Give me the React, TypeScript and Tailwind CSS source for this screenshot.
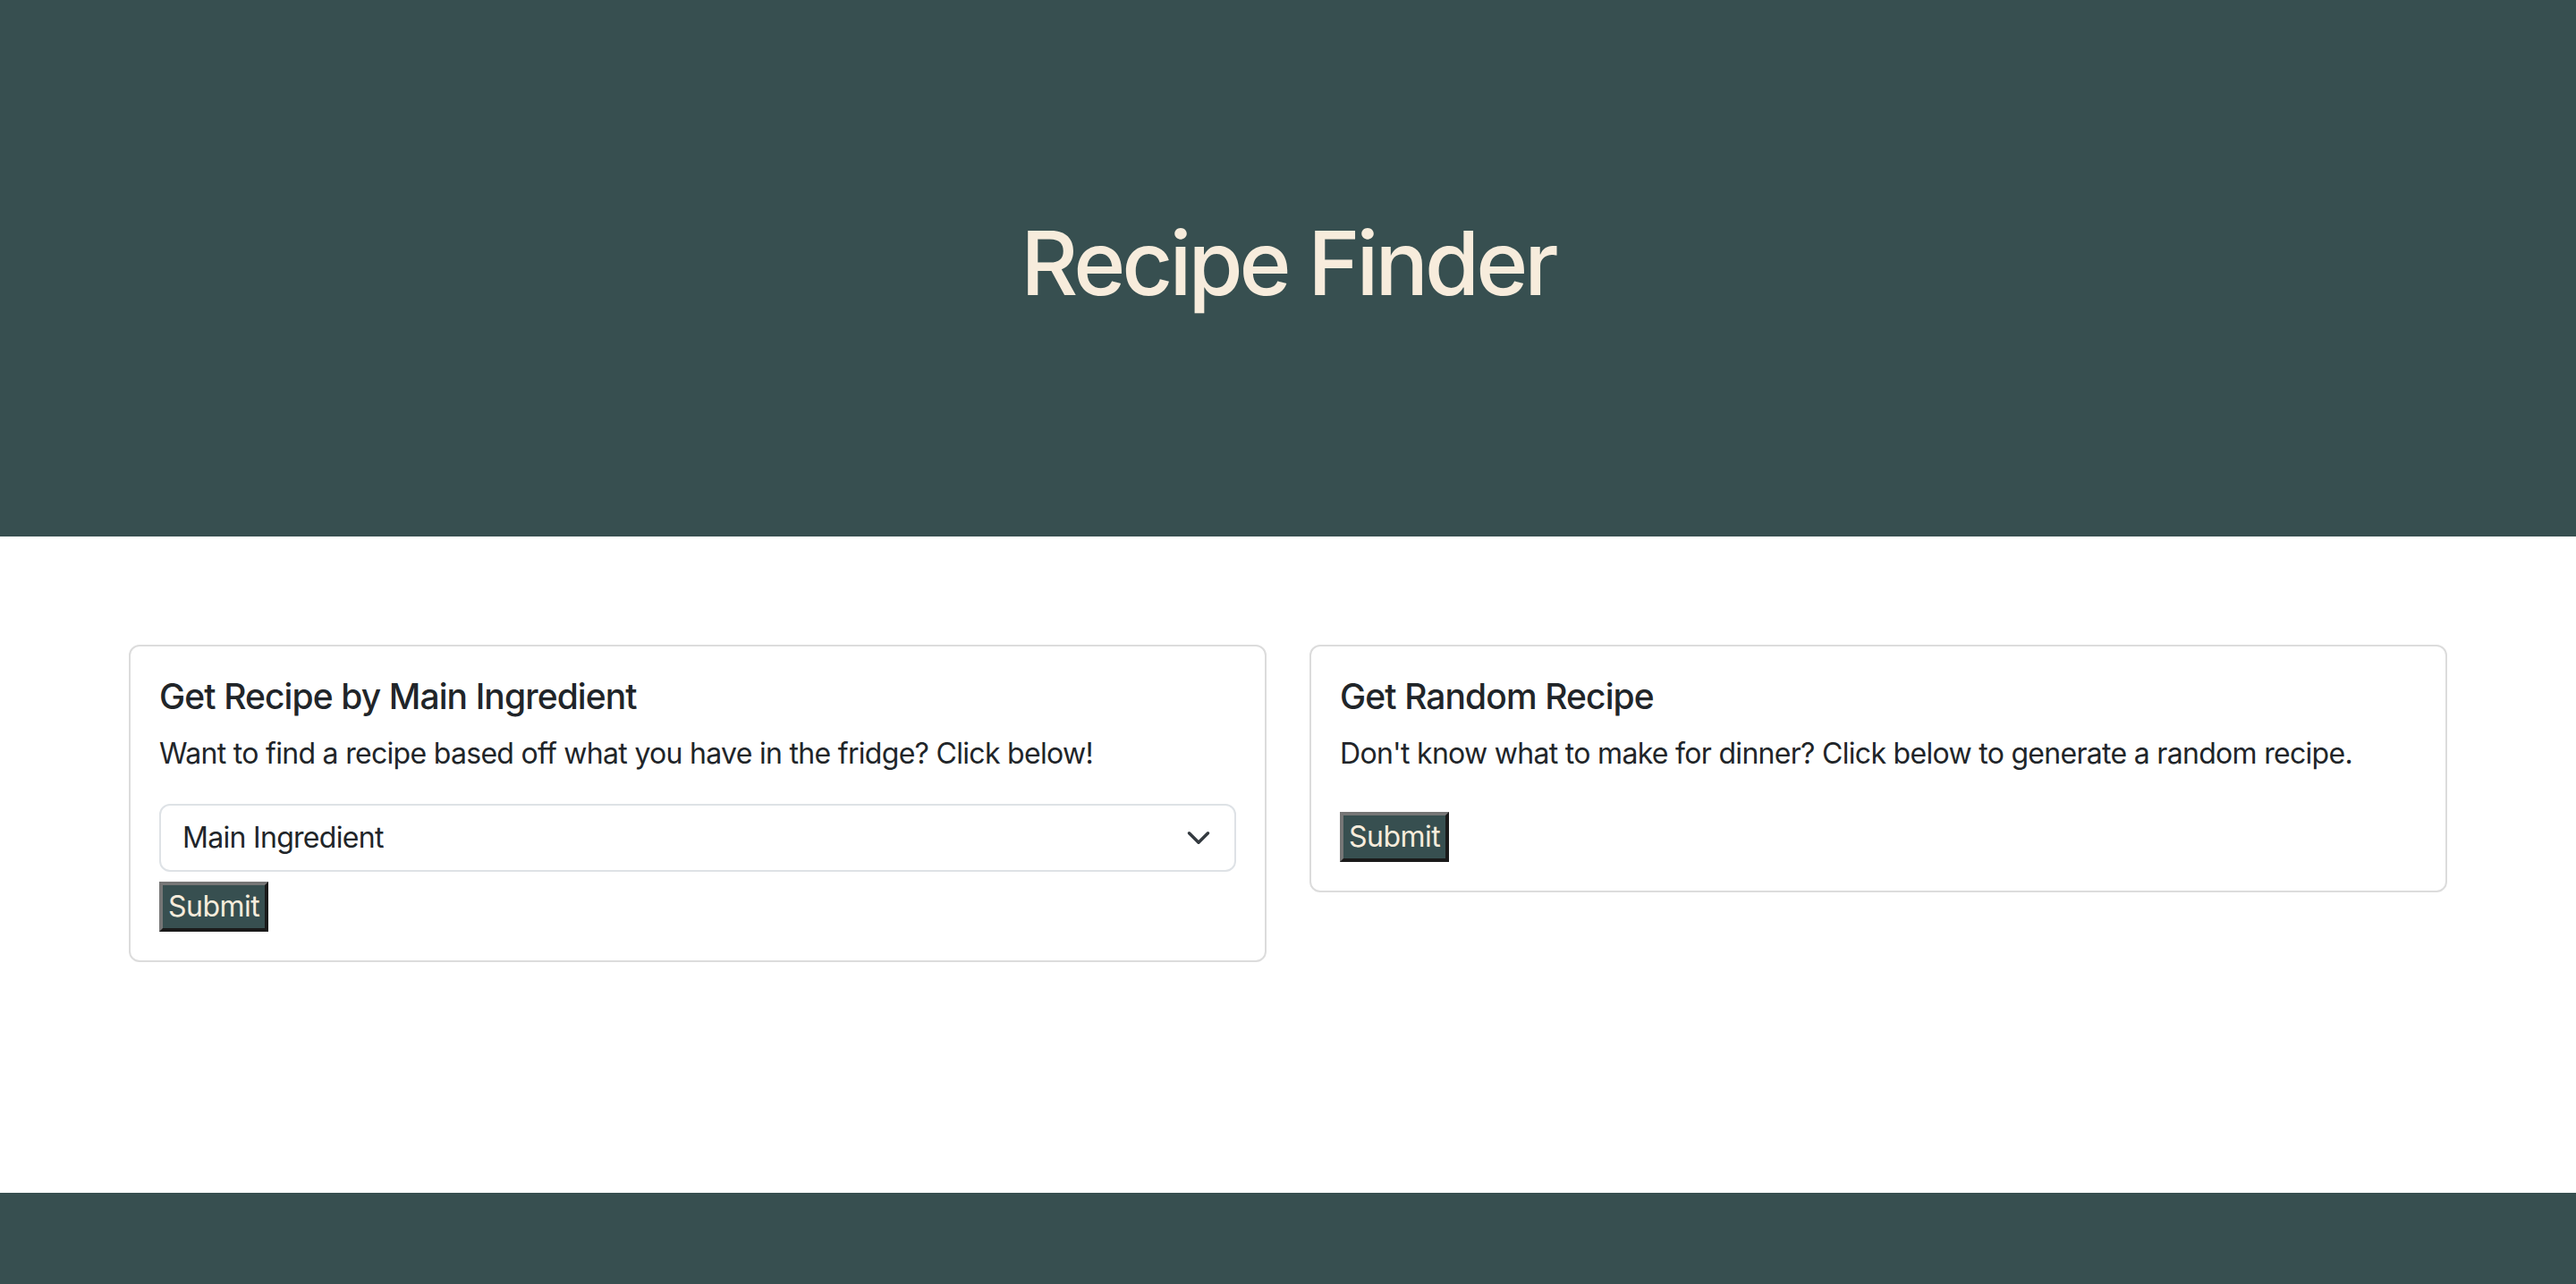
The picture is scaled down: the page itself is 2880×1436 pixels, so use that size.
import { useState } from 'react'

const INGREDIENTS = ['Chicken', 'Beef', 'Pork', 'Salmon', 'Pasta', 'Rice']

function SubmitButton({ className = '' }: { className?: string }) {
    return (
        <button
            type="button"
            className={`block bg-[#374f50] text-[#f7ecdc] text-[32px] leading-[48px] tracking-[-0.5px] px-[6px] border-[4px] border-solid border-t-[#767676] border-l-[#767676] border-b-[#1a1a1a] border-r-[#1a1a1a] ${className}`}
        >
            Submit
        </button>
    )
}

export default function App() {
    const [ingredient, setIngredient] = useState('')

    return (
        <div className="h-screen flex flex-col bg-white text-[#212529] font-['Inter','Liberation_Sans',sans-serif]">
            {/* Header */}
            <header className="h-[600px] shrink-0 bg-[#374f50] flex items-center justify-center pb-[12px]">
                <h1 className="text-[99px] leading-[1.2] font-medium text-[#f7ecdc] tracking-[-4px]">
                    Recipe Finder
                </h1>
            </header>

            {/* Cards */}
            <main className="flex-1 pt-[121px]">
                <div className="mx-[144px] grid grid-cols-2 gap-[48px] items-start">
                    <div className="border-2 border-[#dcdcdc] rounded-[12px] p-[32px]">
                        <h5 className="text-[39px] leading-[48px] font-medium tracking-[-0.9px] mb-[16px]">
                            Get Recipe by Main Ingredient
                        </h5>
                        <p className="text-[32px] leading-[48px] tracking-[-0.7px] mb-[32px]">
                            Want to find a recipe based off what you have in the fridge? Click below!
                        </p>
                        <div className="relative">
                            <select
                                value={ingredient}
                                onChange={e => setIngredient(e.target.value)}
                                className="appearance-none w-full bg-white border-2 border-[#dee2e6] rounded-[12px] py-[12px] pl-[24px] pr-[72px] text-[32px] leading-[48px] tracking-[-0.7px] text-[#212529]"
                            >
                                <option value="">Main Ingredient</option>
                                {INGREDIENTS.map(i => (
                                    <option key={i} value={i}>{i}</option>
                                ))}
                            </select>
                            <svg
                                className="absolute right-[28px] top-1/2 -translate-y-1/2 pointer-events-none"
                                width="28"
                                height="28"
                                viewBox="0 0 16 16"
                                fill="none"
                            >
                                <path d="m2 5 6 6 6-6" stroke="#343a40" strokeWidth="2" strokeLinecap="round" strokeLinejoin="round" />
                            </svg>
                        </div>
                        <SubmitButton className="mt-[11px]" />
                    </div>

                    <div className="border-2 border-[#dcdcdc] rounded-[12px] p-[32px]">
                        <h5 className="text-[39px] leading-[48px] font-medium tracking-[-0.9px] mb-[16px]">
                            Get Random Recipe
                        </h5>
                        <p className="text-[32px] leading-[48px] tracking-[-0.7px]">
                            Don't know what to make for dinner? Click below to generate a random recipe.
                        </p>
                        <SubmitButton className="mt-[41px]" />
                    </div>
                </div>
            </main>

            {/* Footer */}
            <footer className="h-[102px] shrink-0 bg-[#374f50]"></footer>
        </div>
    )
}
